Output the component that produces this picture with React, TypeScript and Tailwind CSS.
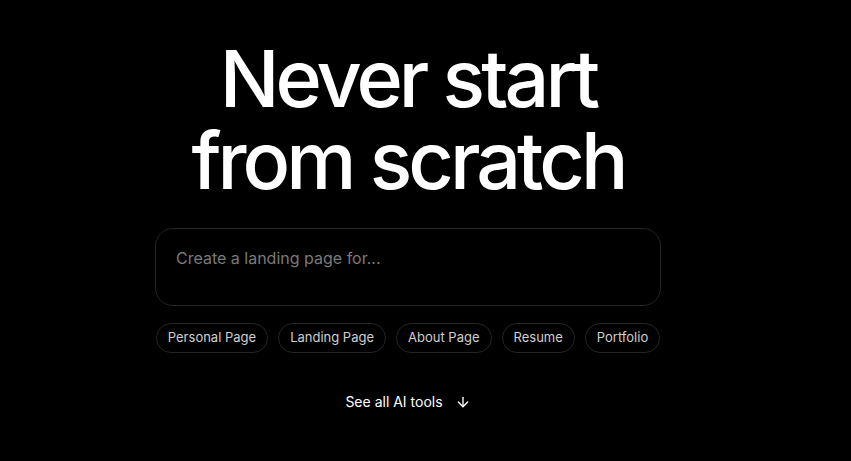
import { ArrowDown } from 'lucide-react';

const chips = ['Personal Page', 'Landing Page', 'About Page', 'Resume', 'Portfolio'];

export default function App() {
  return (
    <div className="min-h-screen w-full bg-black text-white font-['Inter',sans-serif]">
      <div className="w-[816px] flex flex-col items-center">
        <h1 className="mt-[37px] text-center text-[79px] leading-[82px] font-medium tracking-[-0.05em]">
          Never start
          <br />
          from scratch
        </h1>

        <div className="mt-[27px] w-[506px] h-[78px] rounded-[18px] border border-[#262626] px-5 pt-[17px]">
          <p className="text-[16px] text-[#7a7a7a]">Create a landing page for...</p>
        </div>

        <div className="mt-[17px] flex gap-[10px]">
          {chips.map((chip) => (
            <button
              key={chip}
              className="h-[30px] rounded-full border border-[#262626] px-[11px] text-[13px] text-[#cfcfcf]"
            >
              {chip}
            </button>
          ))}
        </div>

        <div className="mt-[38px] flex items-center gap-3 text-[14px] text-white">
          <span>See all AI tools</span>
          <ArrowDown className="w-4 h-4" strokeWidth={2} />
        </div>
      </div>
    </div>
  );
}
